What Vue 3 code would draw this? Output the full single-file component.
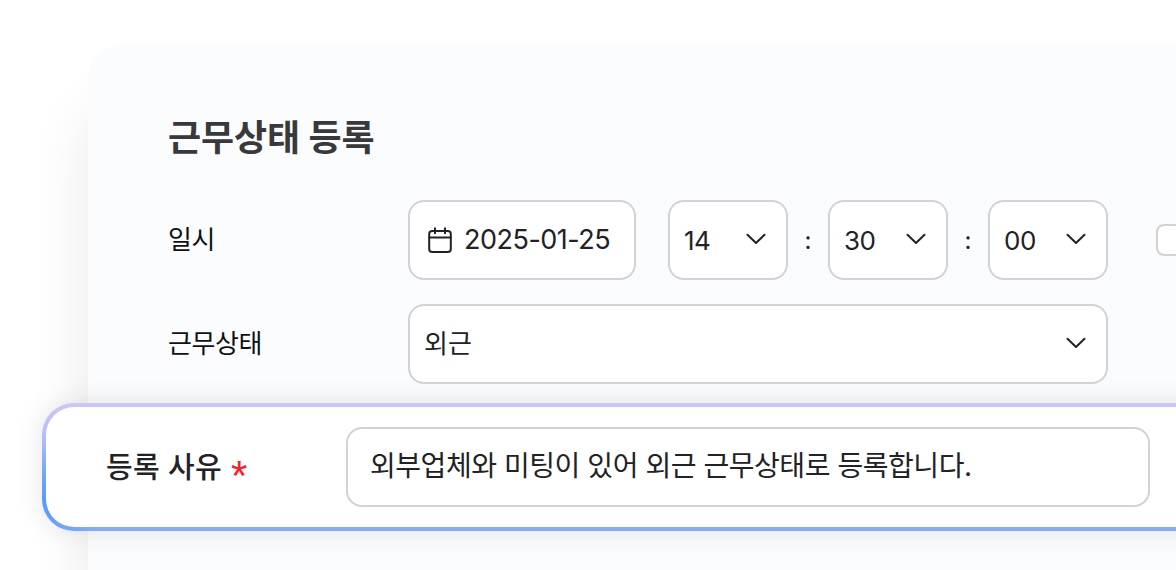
<script setup>
const times = [
  { value: '14', sep: true },
  { value: '30', sep: true },
  { value: '00', sep: false },
]
</script>

<template>
  <div class="page">
    <section class="panel">
      <h1 class="title">근무상태 등록</h1>
      <div class="row">
        <span class="label">일시</span>
        <div class="controls">
          <div class="field date">
            <svg class="cal" viewBox="0 0 24 26" fill="none" stroke="currentColor" stroke-width="2" stroke-linecap="round" stroke-linejoin="round">
              <rect x="1.200" y="4" width="21.600" height="21" rx="3" />
              <path d="M1.200 10.500h21.600M7 1.200v5M17 1.200v5" />
            </svg>
            <span>2025-01-25</span>
          </div>
          <template v-for="t in times" :key="t.value">
            <div class="field time">
              <span class="num">{{ t.value }}</span>
              <svg class="chev" viewBox="0 0 20 12" fill="none" stroke="currentColor" stroke-width="2" stroke-linecap="round" stroke-linejoin="round">
                <path d="M1.500 1.800 10 10l8.500-8.200" />
              </svg>
            </div>
            <span v-if="t.sep" class="colon">:</span>
          </template>
          <div class="check"></div>
        </div>
      </div>
      <div class="row second">
        <span class="label">근무상태</span>
        <div class="field status">
          <span class="status-text">외근</span>
          <svg class="chev" viewBox="0 0 20 12" fill="none" stroke="currentColor" stroke-width="2" stroke-linecap="round" stroke-linejoin="round">
            <path d="M1.500 1.800 10 10l8.500-8.200" />
          </svg>
        </div>
      </div>
      <div class="band">
        <span class="band-label">등록 사유 <em class="req">*</em></span>
        <div class="field reason"><span class="reason-text">외부업체와 미팅이 있어 외근 근무상태로 등록합니다.</span></div>
      </div>
    </section>
  </div>
</template>

<style scoped>
.page {
  width: 1176px;
  height: 570px;
  overflow: hidden;
  background: #fff;
  padding: 44px 0 0 88px;
  box-sizing: border-box;
  font-family: Inter, "Noto Sans CJK KR", sans-serif;
  color: #222226;
}
.panel {
  width: 1200px;
  height: 700px;
  box-sizing: border-box;
  padding: 70px 0 0 80px;
  background: #fbfcfe;
  border-radius: 36px;
  box-shadow: 0 64px 60px rgba(0, 0, 0, 0.09);
}
.title {
  margin: 0;
  font-size: 36px;
  line-height: 48px;
  font-weight: 700;
  letter-spacing: -0.1px;
  color: #39393c;
}
.row {
  display: flex;
  align-items: center;
  margin-top: 38px;
}
.row.second {
  margin-top: 24px;
}
.label {
  width: 240px;
  flex: none;
  font-size: 26px;
  font-weight: 400;
  letter-spacing: -0.4px;
  margin-top: -5px;
  color: #111114;
}
.controls {
  display: flex;
  align-items: center;
}
.field {
  box-sizing: border-box;
  height: 80px;
  display: flex;
  align-items: center;
  background: #fff;
  border: 2px solid #d1d1d6;
  border-radius: 16px;
  font-size: 26px;
  flex: none;
}
.date {
  width: 228px;
  padding-left: 18px;
  gap: 12px;
  margin-right: 32px;
  font-size: 27px;
  letter-spacing: -0.5px;
}
.date span {
  margin-top: -2px;
}
.cal {
  width: 24px;
  height: 26px;
}
.time {
  width: 120px;
  padding: 0 20px 0 14px;
  justify-content: space-between;
  letter-spacing: -0.5px;
}
.chev {
  width: 20px;
  height: 12px;
  margin-top: -2px;
}
.colon {
  width: 40px;
  text-align: center;
  font-size: 24px;
}
.check {
  width: 40px;
  height: 32px;
  margin-left: 48px;
  box-sizing: border-box;
  background: #fff;
  border: 2px solid #d1d1d6;
  border-radius: 8px;
  flex: none;
}
.status {
  width: 700px;
  padding: 0 20px 0 14px;
  justify-content: space-between;
}
.status-text {
  margin-top: -5px;
}
.band {
  box-sizing: border-box;
  width: 1200px;
  height: 128px;
  margin: 19px 0 0 -126px;
  display: flex;
  align-items: center;
  padding-left: 60px;
  border: 4px solid transparent;
  border-radius: 32px;
  background: linear-gradient(#fff, #fff) padding-box,
    radial-gradient(ellipse 60px 64px at 0% 78%, rgba(80, 150, 255, 0.85), rgba(80, 150, 255, 0)) border-box,
    linear-gradient(to bottom, #cbc6fb 0%, #8aaefb 70%, #84acfb 100%) border-box;
  box-shadow: 0 0 28px rgba(0, 0, 0, 0.1);
}
.band-label {
  width: 240px;
  flex: none;
  font-size: 29px;
  font-weight: 500;
  letter-spacing: 0.3px;
  margin-top: -5px;
}
.req {
  font-family: "Liberation Sans", sans-serif;
  font-style: normal;
  font-weight: 400;
  font-size: 42px;
  line-height: 0;
  letter-spacing: 0;
  color: #f5222d;
  margin-left: 1px;
  vertical-align: -12px;
}
.reason {
  width: 804px;
  padding-left: 22px;
  font-size: 28px;
  letter-spacing: -0.45px;
}
.reason-text {
  margin-top: -6px;
}
</style>

<style>
html, body { margin: 0; overflow: hidden; }
</style>
